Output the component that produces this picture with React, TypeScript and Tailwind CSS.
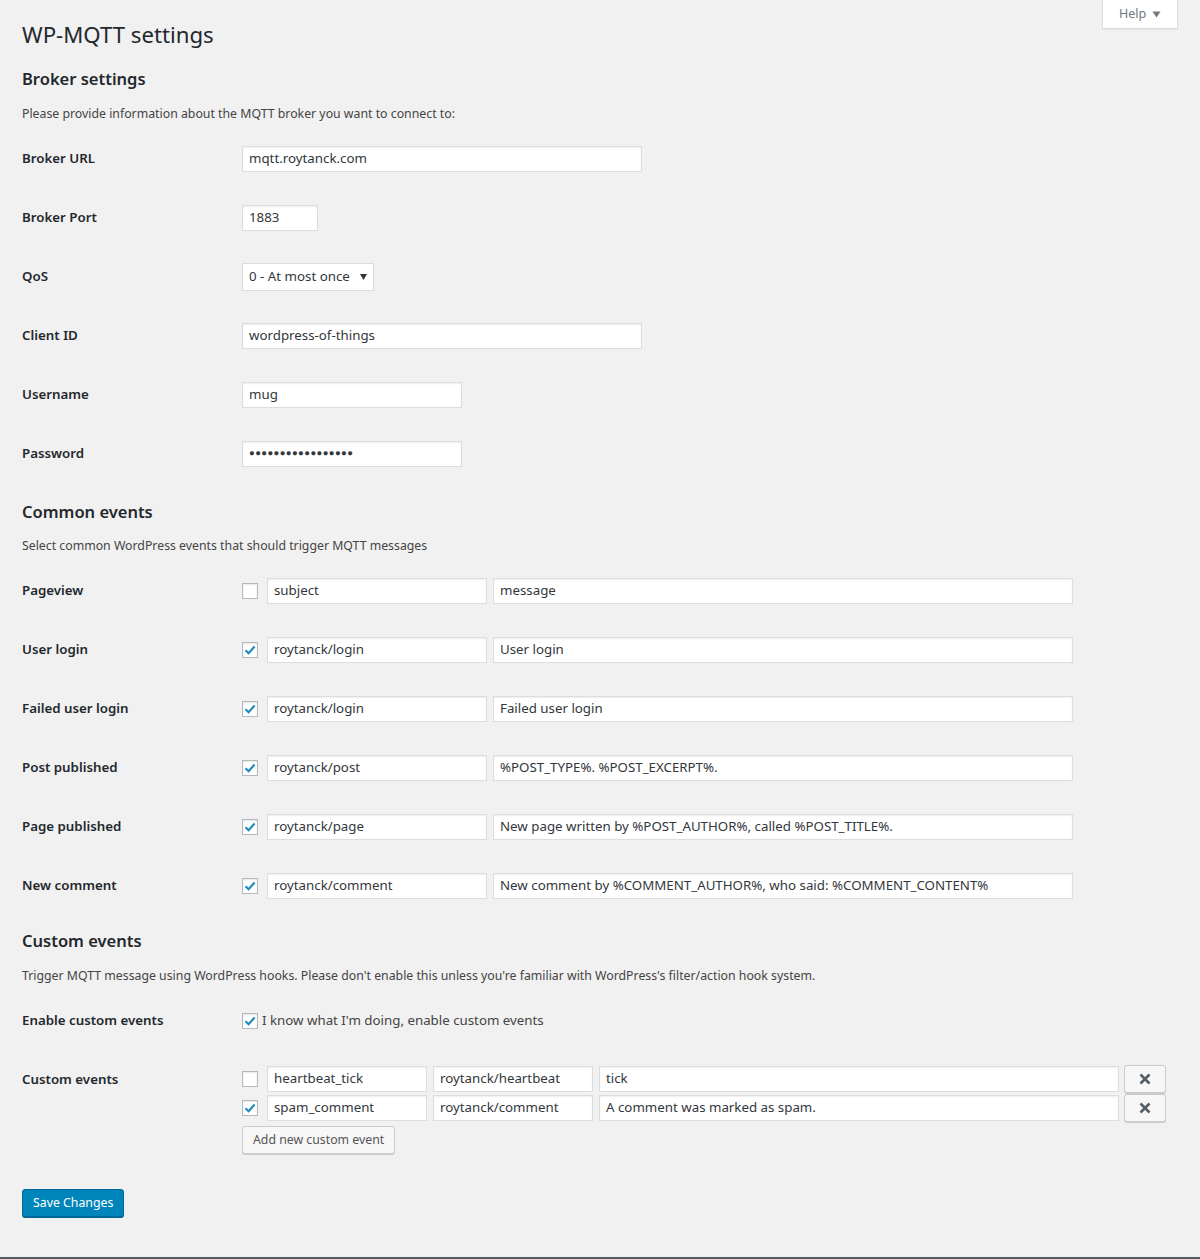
import type { ReactNode } from "react";

const font = { fontFamily: '"Noto Sans", "Open Sans", sans-serif' };

function Check({ checked }: { checked: boolean }) {
    return (
        <span className="inline-flex w-4 h-4 shrink-0 items-center justify-center border border-[#b4b9be] bg-white shadow-[inset_0_1px_2px_rgba(0,0,0,0.1)]">
            {checked && (
                <svg width="14" height="14" viewBox="0 0 14 14">
                    <path d="M2.5 7.2 L5.6 10.2 L11.6 3.6" fill="none" stroke="#1e8cbe" strokeWidth="2.2" />
                </svg>
            )}
        </span>
    );
}

function Field({ value, w }: { value: string; w: string }) {
    return (
        <div className={"h-[26px] flex items-center px-[6px] bg-white border border-[#ddd] shadow-[inset_0_1px_2px_rgba(0,0,0,0.07)] text-[13.3px] text-[#32373c] " + w}>
            {value}
        </div>
    );
}

function Row({ label, children, h = "h-[59px]" }: { label: string; children: ReactNode; h?: string }) {
    return (
        <div className={"flex items-center " + h}>
            <div className="w-[220px] shrink-0 text-[13.3px] font-semibold text-[#23282d]">{label}</div>
            <div className="flex items-center">{children}</div>
        </div>
    );
}

const common = [
    { label: "Pageview", on: false, subject: "subject", msg: "message" },
    { label: "User login", on: true, subject: "roytanck/login", msg: "User login" },
    { label: "Failed user login", on: true, subject: "roytanck/login", msg: "Failed user login" },
    { label: "Post published", on: true, subject: "roytanck/post", msg: "%POST_TYPE%. %POST_EXCERPT%." },
    { label: "Page published", on: true, subject: "roytanck/page", msg: "New page written by %POST_AUTHOR%, called %POST_TITLE%." },
    { label: "New comment", on: true, subject: "roytanck/comment", msg: "New comment by %COMMENT_AUTHOR%, who said: %COMMENT_CONTENT%" },
];

const custom = [
    { on: false, hook: "heartbeat_tick", subject: "roytanck/heartbeat", msg: "tick" },
    { on: true, hook: "spam_comment", subject: "roytanck/comment", msg: "A comment was marked as spam." },
];

function RemoveButton() {
    return (
        <button className="w-[42px] h-[28px] ml-[5px] flex items-center justify-center rounded-[3px] border border-[#ccc] bg-[#f7f7f7] shadow-[0_1px_0_#ccc]">
            <svg width="12" height="12" viewBox="0 0 12 12">
                <path d="M1.5 1.5 L10.5 10.5 M10.5 1.5 L1.5 10.5" stroke="#555d66" strokeWidth="2.6" />
            </svg>
        </button>
    );
}

export default function App() {
    return (
        <div style={font} className="w-full h-[1259px] bg-[#f1f1f1] flex flex-col text-[#23282d]">
            <div className="relative flex-1 px-[22px]">
                <div className="absolute right-[22px] top-0 w-[76px] h-[29px] bg-white border-x border-b border-[#ddd] shadow-[0_1px_1px_rgba(0,0,0,0.04)] flex items-center justify-center gap-[6px] text-[12.5px] text-[#72777c]">
                    Help
                    <svg width="9" height="7" viewBox="0 0 9 7">
                        <path d="M0.5 0.5 L8.5 0.5 L4.5 6.5 Z" fill="#72777c" />
                    </svg>
                </div>

                <h1 className="pt-[20px] text-[22.2px] leading-[30px] font-normal">WP-MQTT settings</h1>

                <h2 className="mt-[17px] text-[16.5px] leading-[24px] font-semibold">Broker settings</h2>
                <p className="mt-[13px] text-[12.3px] leading-[20px] text-[#444]">Please provide information about the MQTT broker you want to connect to:</p>

                <div className="mt-[5px]">
                    <Row label="Broker URL"><Field value="mqtt.roytanck.com" w="w-[400px]" /></Row>
                    <Row label="Broker Port"><Field value="1883" w="w-[76px]" /></Row>
                    <Row label="QoS">
                        <div className="h-[28px] w-[132px] flex items-center justify-between pl-[6px] pr-[6px] bg-white border border-[#ddd] text-[13.3px] text-[#32373c]">
                            0 - At most once
                            <svg width="7" height="6" viewBox="0 0 7 6">
                                <path d="M0 0 L7 0 L3.5 6 Z" fill="#32373c" />
                            </svg>
                        </div>
                    </Row>
                    <Row label="Client ID"><Field value="wordpress-of-things" w="w-[400px]" /></Row>
                    <Row label="Username"><Field value="mug" w="w-[220px]" /></Row>
                    <Row label="Password">
                        <div className="h-[26px] w-[220px] flex items-center px-[6px] bg-white border border-[#ddd] shadow-[inset_0_1px_2px_rgba(0,0,0,0.07)] text-[9.5px] tracking-[0.4px] text-[#32373c]">
                            {"\u25CF".repeat(17)}
                        </div>
                    </Row>
                </div>

                <h2 className="mt-[17px] text-[16.5px] leading-[24px] font-semibold">Common events</h2>
                <p className="mt-[12px] text-[12.3px] leading-[20px] text-[#444]">Select common WordPress events that should trigger MQTT messages</p>

                <div className="mt-[5px]">
                    {common.map((c) => (
                        <Row key={c.label} label={c.label}>
                            <Check checked={c.on} />
                            <div className="ml-[9px]"><Field value={c.subject} w="w-[220px]" /></div>
                            <div className="ml-[6px]"><Field value={c.msg} w="w-[580px]" /></div>
                        </Row>
                    ))}
                </div>

                <h2 className="mt-[14px] text-[16.5px] leading-[24px] font-semibold">Custom events</h2>
                <p className="mt-[13px] text-[12.3px] leading-[20px] text-[#444]">Trigger MQTT message using WordPress hooks. Please don't enable this unless you're familiar with WordPress's filter/action hook system.</p>

                <div className="mt-[5px]">
                    <Row label="Enable custom events">
                        <Check checked={true} />
                        <span className="ml-[4px] text-[13.3px] text-[#444]">I know what I'm doing, enable custom events</span>
                    </Row>
                    <div className="flex pt-[15px]">
                        <div className="w-[220px] shrink-0 pt-[5px] text-[13.3px] font-semibold">Custom events</div>
                        <div className="flex flex-col gap-[1px]">
                            {custom.map((c) => (
                                <div key={c.hook} className="flex items-center h-[28px]">
                                    <Check checked={c.on} />
                                    <div className="ml-[9px]"><Field value={c.hook} w="w-[160px]" /></div>
                                    <div className="ml-[6px]"><Field value={c.subject} w="w-[160px]" /></div>
                                    <div className="ml-[6px]"><Field value={c.msg} w="w-[520px]" /></div>
                                    <RemoveButton />
                                </div>
                            ))}
                            <button className="mt-[3px] self-start h-[28px] px-[10px] rounded-[3px] border border-[#ccc] bg-[#f7f7f7] shadow-[0_1px_0_#ccc] text-[12.3px] text-[#555]">
                                Add new custom event
                            </button>
                        </div>
                    </div>
                </div>

                <button className="mt-[35px] h-[28px] px-[10px] rounded-[3px] border border-[#006799] bg-[#0085ba] shadow-[0_1px_0_#006799] text-[12.3px] text-white">
                    Save Changes
                </button>
            </div>
            <div className="h-[2px] bg-[#555d66]" />
        </div>
    );
}
